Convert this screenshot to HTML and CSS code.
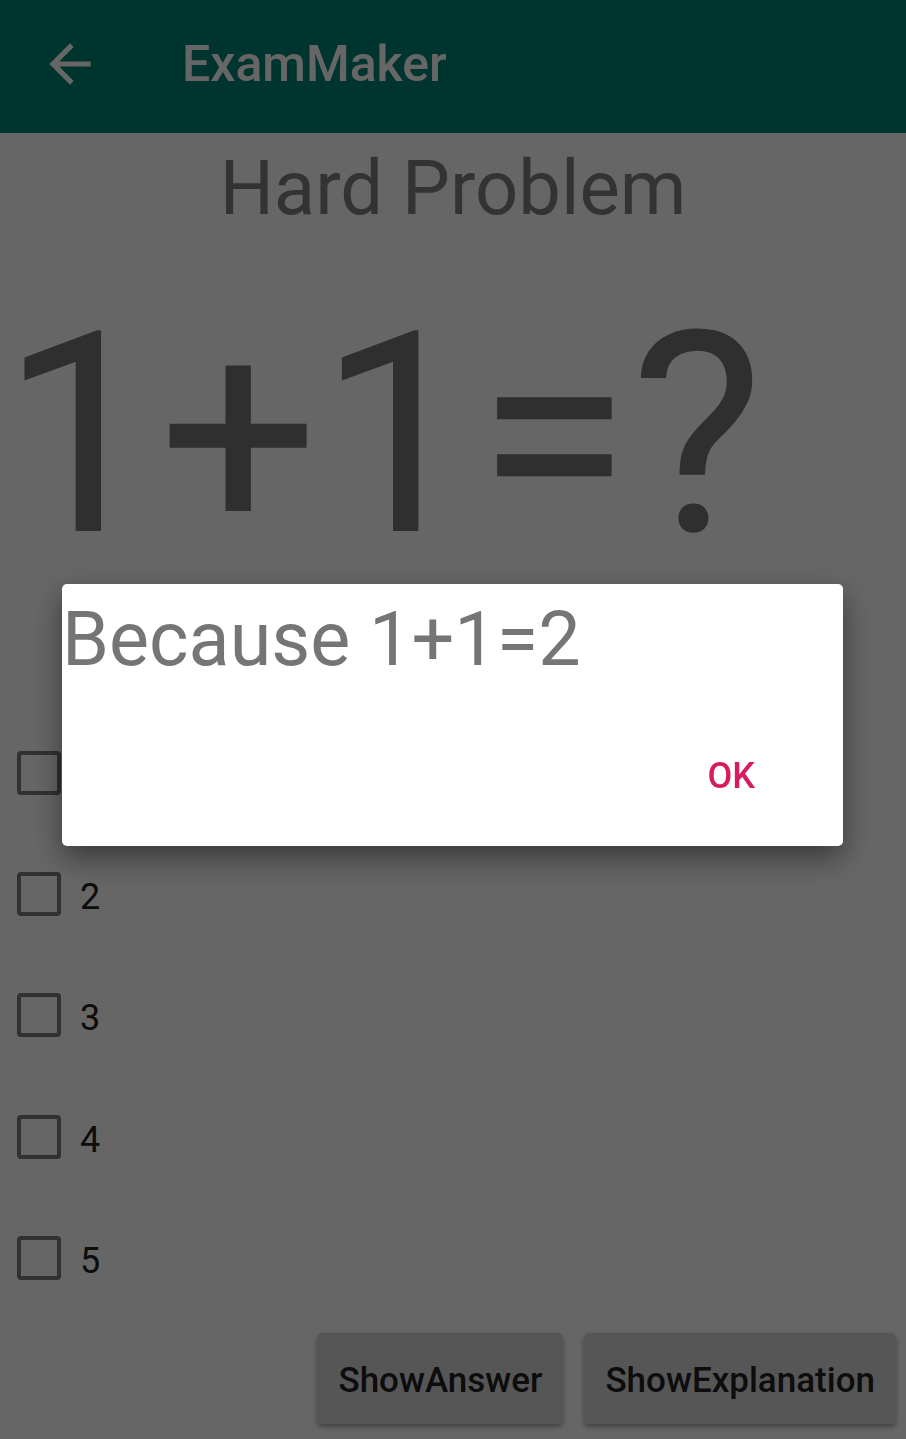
FILE: index.html
```html
<!DOCTYPE html>
<html>
<head>
<meta charset="utf-8">
<link rel="stylesheet" href="styles.css">
</head>
<body>
<div class="app">
  <header class="toolbar">
    <span class="nav-btn">
      <svg viewBox="0 0 24 24" width="62" height="62"><path d="M20 11H7.83l5.59-5.59L12 4l-8 8 8 8 1.41-1.41L7.83 13H20v-2z" fill="#ffffff"/></svg>
    </span>
    <span class="toolbar-title">ExamMaker</span>
  </header>
  <main class="content">
    <h1 class="problem-title">Hard Problem</h1>
    <div class="question">1+1=?</div>
    <ul class="options">
      <li class="option"><span class="box"></span><span class="label">1</span></li>
      <li class="option"><span class="box"></span><span class="label">2</span></li>
      <li class="option"><span class="box"></span><span class="label">3</span></li>
      <li class="option"><span class="box"></span><span class="label">4</span></li>
      <li class="option"><span class="box"></span><span class="label">5</span></li>
    </ul>
    <div class="actions">
      <button class="btn">ShowAnswer</button>
      <button class="btn">ShowExplanation</button>
    </div>
  </main>
</div>
<div class="scrim"></div>
<div class="dialog">
  <p class="dialog-msg">Because 1+1=2</p>
  <div class="dialog-buttons">
    <button class="dialog-ok">OK</button>
  </div>
</div>
</body>
</html>
```
FILE: styles.css
```css
html, body {
  margin: 0;
  padding: 0;
  background: #ffffff;
  font-family: Roboto, "Liberation Sans", sans-serif;
}
.app {
  width: 906px;
  height: 1439px;
  overflow: hidden;
}
.toolbar {
  height: 133px;
  background: #008577;
  display: flex;
  align-items: center;
  box-sizing: border-box;
}
.nav-btn {
  width: 62px;
  height: 62px;
  margin-left: 39px;
  margin-top: -6px;
  display: flex;
}
.toolbar-title {
  margin-left: 81px;
  margin-top: -6px;
  color: #ffffff;
  font-size: 50px;
  font-weight: 500;
}
.content {
  display: flex;
  flex-direction: column;
}
.problem-title {
  margin: 10px 0 0 0;
  text-align: center;
  font-size: 76px;
  font-weight: 400;
  color: #808080;
  line-height: normal;
}
.question {
  margin-top: 37px;
  padding-left: 1px;
  font-size: 281px;
  line-height: normal;
  color: #757575;
}
.options {
  list-style: none;
  margin: 112px 0 0 0;
  padding: 0;
}
.option {
  height: 121.3px;
  display: flex;
  align-items: center;
  padding-left: 17px;
}
.box {
  width: 44px;
  height: 44px;
  box-sizing: border-box;
  border: 4.5px solid #7a7a7a;
  border-radius: 4px;
}
.label {
  margin-left: 19px;
  padding-top: 6px;
  font-size: 36px;
  color: #212121;
}
.actions {
  display: flex;
  justify-content: flex-end;
  gap: 21px;
  margin-top: 15px;
  padding-right: 10px;
}
.btn {
  height: 91px;
  padding: 4px 21px 0;
  border: none;
  border-radius: 5px;
  background: #d6d7d7;
  color: #212121;
  font-family: Roboto, "Liberation Sans", sans-serif;
  font-size: 35px;
  font-weight: 500;
  box-shadow: 0 3px 5px rgba(0,0,0,0.35);
}
.scrim {
  position: fixed;
  inset: 0;
  background: rgba(0,0,0,0.6);
}
.dialog {
  position: fixed;
  left: 62px;
  top: 584px;
  width: 781px;
  height: 262px;
  background: #ffffff;
  border-radius: 5px;
  box-shadow: 0 12px 30px rgba(0,0,0,0.45);
  display: flex;
  flex-direction: column;
}
.dialog-msg {
  margin: 11px 0 0 0;
  font-size: 75.5px;
  line-height: normal;
  color: #757575;
}
.dialog-buttons {
  display: flex;
  justify-content: flex-end;
  margin-top: 62px;
  padding-right: 72px;
}
.dialog-ok {
  border: none;
  background: transparent;
  color: #d81b60;
  font-family: Roboto, "Liberation Sans", sans-serif;
  font-size: 36px;
  font-weight: 500;
  padding: 10px 16px;
}
```
